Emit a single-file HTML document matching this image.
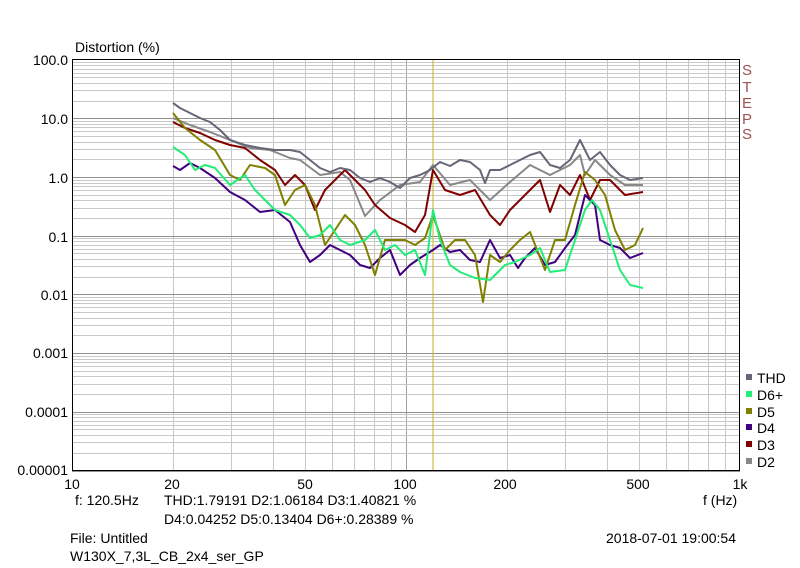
<!DOCTYPE html>
<html><head><meta charset="utf-8"><style>
body{margin:0;background:#fff;width:800px;height:568px;overflow:hidden;font-family:"Liberation Sans",sans-serif;}
svg{position:absolute;left:0;top:0}
text{font-family:"Liberation Sans",sans-serif;font-size:14px;fill:#000}
</style></head><body>
<svg id="s" width="800" height="568" xmlns="http://www.w3.org/2000/svg">
<g id="grid"></g>
<line x1="433" y1="60" x2="433" y2="470" stroke="#c8b020" stroke-width="1"/>
<g fill="none" stroke-width="2" stroke-linejoin="round">
<polyline stroke="#888888" points="173,118 190,125 210,132 230,140 250,148 270,150 290,158 300,160 320,175 340,172 350,180 365,216 380,200 400,185 420,182 433,165 450,185 470,180 490,200 510,182 530,165 550,175 570,165 580,155 585,175 595,160 610,175 625,185 643,185"/>
<polyline stroke="#800000" points="173,122 185,128 200,133 215,140 230,145 245,148 260,160 275,170 285,185 295,175 305,185 315,210 325,190 335,180 345,170 355,180 365,190 375,205 390,218 405,225 415,232 425,215 433,170 445,190 460,195 475,190 490,215 500,225 510,210 520,200 530,190 540,180 550,212 560,185 570,195 580,175 590,200 600,180 610,180 625,195 643,192"/>
<polyline stroke="#400080" points="173,166 180,170 190,163 200,168 215,178 230,192 245,200 260,212 275,210 290,222 300,245 310,262 320,255 330,245 340,250 350,255 360,265 370,268 380,258 390,250 400,275 410,265 420,258 433,250 440,245 450,252 460,250 470,260 480,262 490,240 500,258 510,255 518,268 525,258 535,248 545,265 555,262 565,248 575,235 585,195 595,205 600,240 610,245 620,248 630,258 643,253"/>
<polyline stroke="#808000" points="173,113 185,128 200,140 215,150 230,175 240,180 250,165 265,168 275,175 285,205 295,190 305,185 315,205 325,245 335,230 345,215 355,225 365,245 375,275 385,240 395,240 405,240 415,245 425,238 433,215 445,250 455,240 465,240 475,255 483,302 490,255 500,262 510,250 520,240 530,232 545,270 555,240 565,240 575,205 585,172 595,180 605,195 615,230 625,250 635,245 643,228"/>
<polyline stroke="#22ee77" points="173,147 185,155 195,170 205,165 215,168 230,185 245,175 255,190 265,200 275,210 290,215 300,225 310,238 320,235 330,225 340,240 350,245 365,240 375,230 385,250 395,245 405,255 415,250 425,275 433,210 440,240 450,265 460,272 475,278 490,280 505,265 515,262 530,255 540,248 550,272 565,270 575,240 585,210 592,200 600,210 610,240 620,270 630,285 643,288"/>
<polyline stroke="#666677" points="173,103 180,108 190,113 200,118 210,122 220,130 230,140 245,145 260,148 275,150 290,150 300,152 310,160 320,168 330,172 340,168 350,170 360,178 370,182 380,178 390,182 400,188 410,178 420,175 430,170 440,162 450,166 460,160 470,162 480,170 485,183 490,170 500,170 510,165 520,160 530,155 540,152 550,165 560,168 570,160 580,140 590,160 600,152 610,165 620,175 630,180 643,178"/>
</g>
<rect x="72.5" y="59.5" width="667" height="411" fill="none" stroke="#000" stroke-width="1"/>
<text x="75" y="52">Distortion (%)</text>
<g text-anchor="end">
<text x="68" y="65">100.0</text><text x="68" y="124">10.0</text><text x="68" y="183">1.0</text><text x="68" y="242">0.1</text><text x="68" y="300">0.01</text><text x="68" y="358">0.001</text><text x="68" y="417">0.0001</text><text x="68" y="475">0.00001</text>
</g>
<g text-anchor="middle">
<text x="72" y="489">10</text><text x="172" y="489">20</text><text x="305" y="489">50</text><text x="405" y="489">100</text><text x="505" y="489">200</text><text x="638" y="489">500</text><text x="740" y="489">1k</text>
</g>
<text x="703" y="505">f (Hz)</text>
<text x="75" y="505">f: 120.5Hz</text>
<text x="164" y="505">THD:1.79191  D2:1.06184  D3:1.40821 %</text>
<text x="164" y="524">D4:0.04252  D5:0.13404  D6+:0.28389 %</text>
<text x="70" y="543">File: Untitled</text>
<text x="70" y="561">W130X_7,3L_CB_2x4_ser_GP</text>
<text x="606" y="543">2018-07-01 19:00:54</text>
<g text-anchor="middle">
<text x="747" y="75" style="fill:#a05050;font-size:15px">S</text><text x="747" y="92" style="fill:#a05050;font-size:15px">T</text><text x="747" y="108" style="fill:#a05050;font-size:15px">E</text><text x="747" y="124" style="fill:#a05050;font-size:15px">P</text><text x="747" y="139" style="fill:#a05050;font-size:15px">S</text>
</g>
<g>
<rect x="746" y="374" width="6" height="6" fill="#666677"/><text x="757" y="383">THD</text>
<rect x="746" y="391" width="6" height="6" fill="#22ee77"/><text x="757" y="400">D6+</text>
<rect x="746" y="408" width="6" height="6" fill="#808000"/><text x="757" y="417">D5</text>
<rect x="746" y="424" width="6" height="6" fill="#400080"/><text x="757" y="433">D4</text>
<rect x="746" y="441" width="6" height="6" fill="#800000"/><text x="757" y="450">D3</text>
<rect x="746" y="458" width="6" height="6" fill="#888888"/><text x="757" y="467">D2</text>
</g>
</svg>
<script>
var g=document.getElementById('grid'),h='';
var L=72,R=740,T=59.5,B=470.5,dx=(R-L)/2,dy=(B-T)/7;
for(var d=0;d<2;d++)for(var k=1;k<10;k++){var x=Math.round(L+dx*(d+Math.log10(k)))+0.5;
h+='<line x1="'+x+'" y1="'+T+'" x2="'+x+'" y2="'+B+'" stroke="'+(k==1?'#a0a0a0':'#c8c8c8')+'"/>';}
for(var d=0;d<7;d++)for(var k=1;k<10;k++){var y=Math.round(T+dy*(d+1-Math.log10(k)))+0.5;
h+='<line x1="'+L+'" y1="'+y+'" x2="'+R+'" y2="'+y+'" stroke="'+(k==1?'#909090':'#c8c8c8')+'"/>';}
g.innerHTML=h;
</script>
</body></html>
